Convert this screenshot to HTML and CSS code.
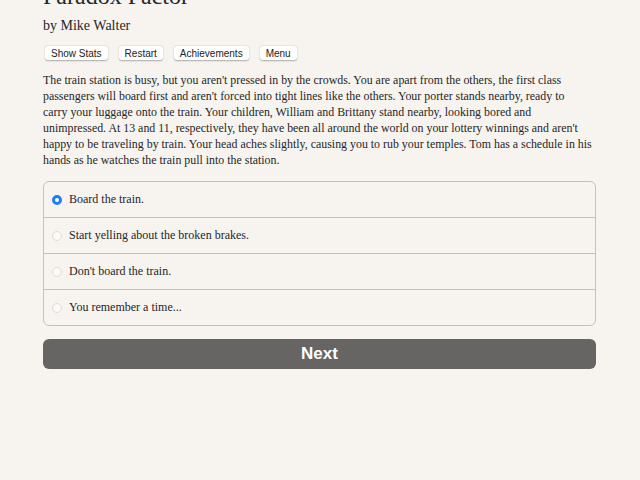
FILE: index.html
```html
<!DOCTYPE html>
<html lang="en">
<head>
    <meta charset="UTF-8">
    <meta name="viewport" content="width=device-width, initial-scale=1.0">
    <title>Paradox Factor</title>
    <link rel="stylesheet" href="styles.css">
</head>
<body>
    <div class="container">
        <h1 class="title">Paradox Factor</h1>
        <h2 class="author">by Mike Walter</h2>
        <div class="buttons">
            <button class="spacedLink">Show Stats</button>
            <button class="spacedLink">Restart</button>
            <button class="spacedLink">Achievements</button>
            <button class="spacedLink">Menu</button>
        </div>

        <p class="story">The train station is busy, but you aren't pressed in by the crowds. You are apart from the others, the first class<br>
        passengers will board first and aren't forced into tight lines like the others. Your porter stands nearby, ready to<br>
        carry your luggage onto the train. Your children, William and Brittany stand nearby, looking bored and<br>
        unimpressed. At 13 and 11, respectively, they have been all around the world on your lottery winnings and aren't<br>
        happy to be traveling by train. Your head aches slightly, causing you to rub your temples. Tom has a schedule in his<br>
        hands as he watches the train pull into the station.</p>

        <form class="choices">
            <label class="choice"><input type="radio" name="choice" checked> Board the train.</label>
            <label class="choice"><input type="radio" name="choice"> Start yelling about the broken brakes.</label>
            <label class="choice"><input type="radio" name="choice"> Don't board the train.</label>
            <label class="choice"><input type="radio" name="choice"> You remember a time...</label>
        </form>

        <button class="next">Next</button>
    </div>
</body>
</html>
```

FILE: styles.css
```css
body {
    background-color: #f7f4f0;
    color: #262626;
    font-family: "Liberation Serif", "Times New Roman", serif;
    margin: 0;
}
.container {
    width: 553px;
    margin: 0 auto 0 43px;
}
.title {
    font-size: 24px;
    font-weight: normal;
    margin: -18px 0 0 0;
    line-height: 28px;
}
.author {
    font-size: 14px;
    font-weight: normal;
    margin: 7px 0 0 0;
    line-height: 18px;
}
.buttons {
    display: flex;
    gap: 11px;
    margin: 11px 0 0 2px;
}
.spacedLink {
    font-family: "Liberation Sans", Arial, sans-serif;
    font-size: 10px;
    color: #222;
    background: #fff;
    border: none;
    border-radius: 3px;
    box-shadow: 0 0.5px 1.5px rgba(0, 0, 0, 0.3);
    padding: 2px 6px 1px;
    line-height: 11px;
}
.story {
    font-size: 11.9px;
    line-height: 16px;
    margin: 12px 0 0 0;
}
.choices {
    margin-top: 13px;
    border: 1px solid #c4c2bf;
    border-radius: 6px;
}
.choice {
    display: flex;
    align-items: center;
    height: 35px;
    font-size: 12px;
    padding-left: 8px;
    border-top: 1px solid #c4c2bf;
}
.choice:first-child {
    border-top: none;
}
.choice input {
    appearance: none;
    width: 10px;
    height: 10px;
    margin: 0 7px 0 0;
    border-radius: 50%;
    border: 1px solid #dedbd8;
    background: #fbfaf9;
}
.choice input:checked {
    border: 3px solid #1f7ff2;
    background: #fff;
}
.next {
    display: block;
    width: 100%;
    margin-top: 13px;
    height: 30px;
    background-color: #676563;
    color: white;
    border: none;
    border-radius: 6px;
    font-family: "Liberation Sans", Arial, sans-serif;
    font-weight: bold;
    font-size: 17px;
}
```
